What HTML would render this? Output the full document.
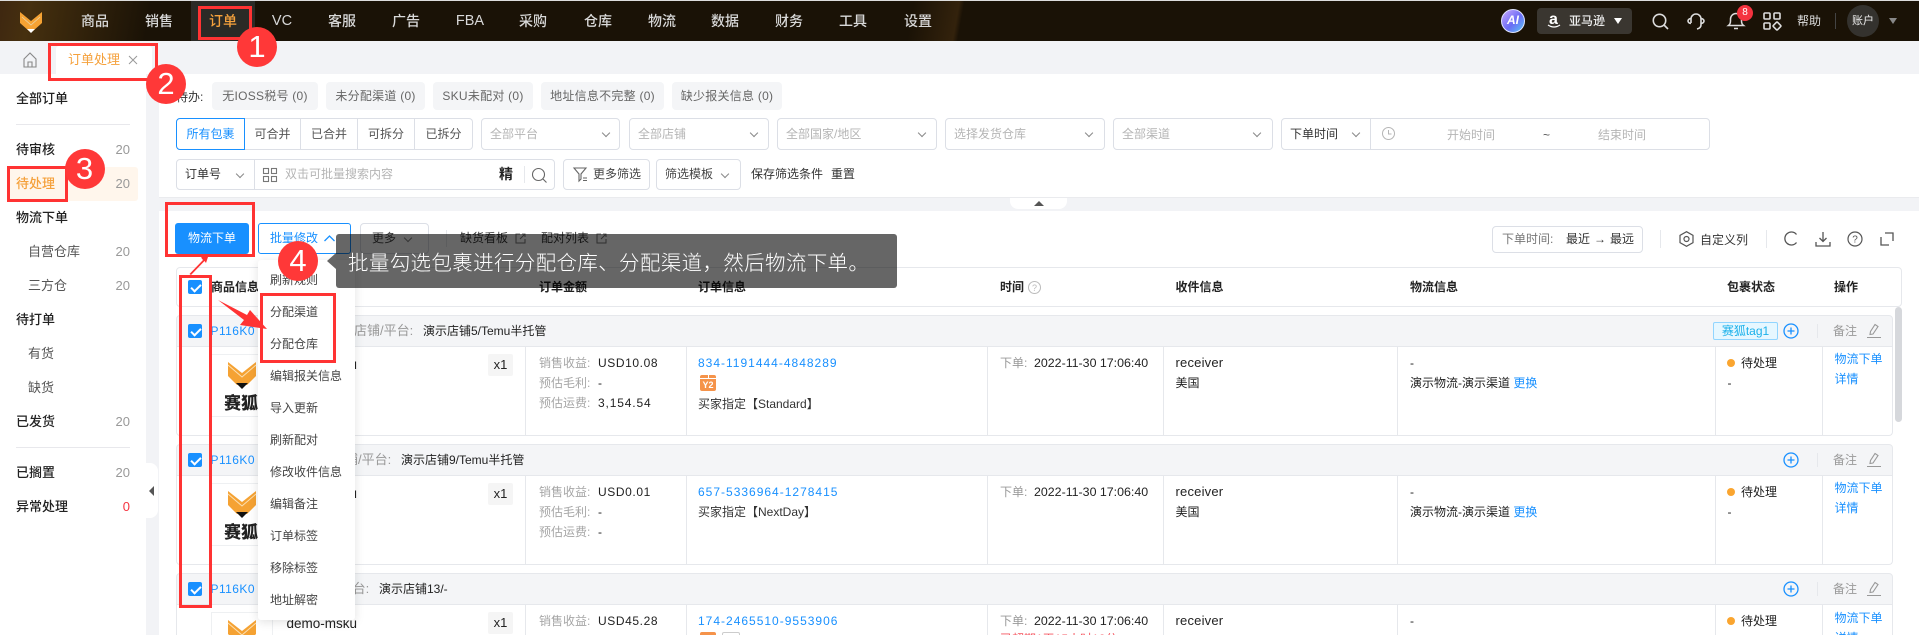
<!DOCTYPE html>
<html lang="zh"><head><meta charset="utf-8"><title>订单处理</title>
<style>
*{box-sizing:border-box;margin:0;padding:0}
html,body{width:1919px;height:635px;overflow:hidden;background:#f2f3f6}
#root{position:relative;width:1919px;height:635px;overflow:hidden;background:#f2f3f6;font-family:"Liberation Sans","Noto Sans CJK SC",sans-serif;font-size:12px;color:#222}
.t{position:absolute;white-space:nowrap;line-height:20px;height:20px}
.b{position:absolute}
.g{color:#a6a6a6}.bl{color:#1890ff}.d{color:#555}
.v{font-size:12px;letter-spacing:.6px}
.o{font-size:12px;letter-spacing:1px}
.dt{font-size:12.4px}
.p{font-size:12px;letter-spacing:.45px}
.nav{color:#d8d8d8;font-size:14px;transform:translateX(-50%);font-weight:500}
.side{font-size:13px;color:#222;font-weight:500}
.sub{font-size:13px;color:#555;font-weight:400}
.cnt{font-size:13px;color:#999;text-align:right;width:30px;left:100px}
.chip{position:absolute;top:82px;height:28px;background:#f4f5f7;border-radius:4px;color:#666;line-height:28px;text-align:center;font-size:12px;letter-spacing:.25px}
.ipt{position:absolute;border:1px solid #dcdfe6;border-radius:4px;background:#fff}
.ph{color:#b5b5b5}
.arr{position:absolute;width:6px;height:6px;border-right:1px solid #888;border-bottom:1px solid #888;transform:rotate(45deg)}
.seg{position:absolute;top:118px;height:32px;line-height:30px;text-align:center;color:#555;font-size:12px;border:1px solid #dcdfe6;border-left:0;background:#fff}
.th{font-weight:700;top:277px;font-size:12px;color:#222}
.rowhead{position:absolute;left:175.5px;width:1717.5px;background:#f4f5f7;border:1px solid #e6e8ec;border-radius:4px 4px 0 0}
.rowbody{position:absolute;left:175.5px;width:1717.5px;background:#fff;border:1px solid #e6e8ec;border-top:0;border-radius:0 0 4px 4px}
.vl{position:absolute;width:1px;background:#e6e8ec}
.cb{position:absolute;left:188px;width:14px;height:14px;background:#1890ff;border-radius:2px}
.cb:after{content:"";position:absolute;left:4.5px;top:1.5px;width:4px;height:8px;border:solid #fff;border-width:0 2px 2px 0;transform:rotate(45deg)}
.x1{position:absolute;left:488px;width:25px;height:22px;background:#f5f5f5;border-radius:2px;text-align:center;line-height:22px;font-size:13px;color:#222}
.mi{position:absolute;left:270px;font-size:12px;color:#444;white-space:nowrap;line-height:20px}
.rb{position:absolute;border:3px solid #ff3333;z-index:30}
.circ{position:absolute;width:40px;height:40px;border-radius:50%;background:#ff3838;color:#fff;font-size:31px;line-height:40px;text-align:center;z-index:40}
.fox{position:absolute;left:224px;font:900 17px/20px "Noto Sans CJK SC",sans-serif;color:#222;white-space:nowrap}
svg{position:absolute;overflow:visible}
</style></head><body><div id="root">

<!-- top bar -->
<div class="b" style="left:0;top:0;width:1919px;height:1px;background:#ddd"></div>
<div class="b" style="left:0;top:1px;width:1919px;height:40px;background:linear-gradient(100deg,#3e2710 0,#46300f 30px,#1a1206 150px,#1a1206 900px,#33220c 945px,#1a1206 950px)"></div>
<div class="b" style="left:191px;top:1px;width:64px;height:40px;background:#2b2a26"></div>
<svg style="left:20px;top:12px" width="22" height="21" viewBox="0 0 22 21"><path d="M0 0L11 9L22 0V11L13 19H9L0 11Z" fill="#f5a233"/><path d="M2 5L11 13L20 5" fill="none" stroke="#e8d4a8" stroke-width=".8"/><path d="M7 17H15L11 21Z" fill="#fff"/></svg>
<div class="t nav" style="left:95px;top:11px">商品</div>
<div class="t nav" style="left:159px;top:11px">销售</div>
<div class="t nav" style="left:223px;top:11px;color:#f5a13c">订单</div>
<div class="t nav" style="left:282px;top:11px;font-size:14.5px">VC</div>
<div class="t nav" style="left:342px;top:11px">客服</div>
<div class="t nav" style="left:406px;top:11px">广告</div>
<div class="t nav" style="left:470px;top:11px;font-size:14.5px">FBA</div>
<div class="t nav" style="left:533px;top:11px">采购</div>
<div class="t nav" style="left:598px;top:11px">仓库</div>
<div class="t nav" style="left:662px;top:11px">物流</div>
<div class="t nav" style="left:725px;top:11px">数据</div>
<div class="t nav" style="left:789px;top:11px">财务</div>
<div class="t nav" style="left:853px;top:11px">工具</div>
<div class="t nav" style="left:918px;top:11px">设置</div>

<div class="b" style="left:1501px;top:9px;width:24px;height:24px;border-radius:50%;background:linear-gradient(135deg,#c9a8ff,#6b6cf5 55%,#58c8f5);border:1.5px solid #dfe4ff;color:#fff;font:italic 700 12px/21px 'Liberation Sans',sans-serif;text-align:center">AI</div>
<div class="b" style="left:1537px;top:8px;width:95px;height:26px;background:#3a3630;border-radius:4px"></div>
<div class="t" style="left:1549px;top:10px;color:#fff;font:700 16px/20px 'Liberation Sans',sans-serif">a</div>
<svg style="left:1547px;top:24px" width="14" height="5" viewBox="0 0 14 5"><path d="M1 1Q7 5 13 1" fill="none" stroke="#fff" stroke-width="1.2"/></svg>
<div class="t" style="left:1569px;top:11px;color:#eee;font-size:12px;font-weight:500">亚马逊</div>
<svg style="left:1614px;top:18px" width="8" height="6"><path d="M0 0H8L4 6Z" fill="#fff"/></svg>
<svg style="left:1652px;top:13px" width="17" height="17" viewBox="0 0 17 17" fill="none" stroke="#ddd" stroke-width="1.6"><circle cx="7.5" cy="7.5" r="6.2"/><path d="M12 12L16 16"/></svg>
<svg style="left:1687px;top:12px" width="18" height="19" viewBox="0 0 18 19" fill="none" stroke="#ddd" stroke-width="1.6"><path d="M4 11V7a5 5 0 0 1 10 0V13q0 3-4 4"/><path d="M4 6.5Q1 7 1 9t3 2.5M14 6.5q3 .5 3 2.5t-3 2.5"/></svg>
<svg style="left:1727px;top:12px" width="18" height="18" viewBox="0 0 18 18" fill="none" stroke="#ddd" stroke-width="1.5"><path d="M1.500 13.500Q3.500 12 3.500 9V7a5.500 5.500 0 0 1 11 0V9Q14.500 12 16.500 13.500ZM7 16.500H11"/></svg>
<div class="b" style="left:1737px;top:5px;width:16px;height:16px;border-radius:50%;background:#f5333f;color:#fff;font-size:10px;line-height:16px;text-align:center">8</div>
<svg style="left:1763px;top:12px" width="18" height="18" viewBox="0 0 18 18" fill="none" stroke="#ddd" stroke-width="1.6"><rect x="1" y="1" width="6" height="6" rx="1"/><rect x="11" y="1" width="6" height="6" rx="1"/><rect x="1" y="11" width="6" height="6" rx="1"/><rect x="11" y="11" width="6" height="6" rx="1" transform="rotate(45 14 14)"/></svg>
<div class="t" style="left:1797px;top:10.5px;color:#ddd;font-size:12px">帮助</div>
<div class="b" style="left:1835px;top:13px;width:1px;height:16px;background:#444"></div>
<div class="b" style="left:1847px;top:5px;width:32px;height:32px;border-radius:50%;background:#34322e;color:#eee;font-size:11px;line-height:32px;text-align:center">账户</div>
<svg style="left:1889px;top:18px" width="8" height="6"><path d="M0 0H8L4 6Z" fill="#888"/></svg>

<!-- tab band -->
<svg style="left:23px;top:52px" width="14" height="16" viewBox="0 0 14 16" fill="none" stroke="#888" stroke-width="1.1"><path d="M1 7L7 1L13 7V15H1ZM5 15V10H9V15"/></svg>
<div class="b" style="left:56px;top:46px;width:96px;height:28px;background:#fff;border-radius:3px 3px 0 0"></div>
<div class="t" style="left:68px;top:50px;color:#f5a13c;font-size:13px">订单处理</div>
<svg style="left:129px;top:56px" width="8" height="8" fill="none" stroke="#999" stroke-width="1"><path d="M0 0L8 8M8 0L0 8"/></svg>

<!-- sidebar -->
<div class="b" style="left:0;top:74px;width:146px;height:561px;background:#fff"></div>
<div class="t side" style="left:16px;top:89px">全部订单</div>
<div class="b" style="left:16px;top:124px;width:114px;height:1px;background:#e8e8ec"></div>
<div class="t side" style="left:16px;top:140px">待审核</div><div class="t cnt" style="top:140px">20</div>
<div class="b" style="left:8px;top:167px;width:130px;height:34px;background:#fff6ec;border-radius:3px"></div>
<div class="t side" style="left:16px;top:174px;color:#f5a13c">待处理</div><div class="t cnt" style="top:174px">20</div>
<div class="t side" style="left:16px;top:208px">物流下单</div>
<div class="t sub" style="left:28px;top:242px">自营仓库</div><div class="t cnt" style="top:242px">20</div>
<div class="t sub" style="left:28px;top:276px">三方仓</div><div class="t cnt" style="top:276px">20</div>
<div class="t side" style="left:16px;top:310px">待打单</div>
<div class="t sub" style="left:28px;top:344px">有货</div>
<div class="t sub" style="left:28px;top:378px">缺货</div>
<div class="t side" style="left:16px;top:412px">已发货</div><div class="t cnt" style="top:412px">20</div>
<div class="b" style="left:16px;top:447px;width:114px;height:1px;background:#e8e8ec"></div>
<div class="t side" style="left:16px;top:463px">已搁置</div><div class="t cnt" style="top:463px">20</div>
<div class="t side" style="left:16px;top:497px">异常处理</div><div class="t cnt" style="top:497px;color:#f5333f">0</div>
<div class="b" style="left:146px;top:463px;width:12px;height:55px;background:#fff;border-radius:0 8px 8px 0"></div>
<svg style="left:149px;top:486px" width="5" height="10"><path d="M5 0V10L0 5Z" fill="#555"/></svg>

<!-- filter panel -->
<div class="b" style="left:159px;top:74px;width:1760px;height:124px;background:#fff;border-bottom:1px solid #eaebee"></div>
<div class="t" style="left:176px;top:87px;color:#333;font-size:12px">待办:</div>
<div class="chip" style="left:212px;width:106px">无IOSS税号 (0)</div>
<div class="chip" style="left:326px;width:99px">未分配渠道 (0)</div>
<div class="chip" style="left:433px;width:100px">SKU未配对 (0)</div>
<div class="chip" style="left:541px;width:123px">地址信息不完整 (0)</div>
<div class="chip" style="left:672px;width:110px">缺少报关信息 (0)</div>

<div class="seg" style="left:176px;width:69px;border:1px solid #1890ff;border-radius:4px 0 0 4px;color:#1890ff">所有包裹</div>
<div class="seg" style="left:245px;width:56px">可合并</div>
<div class="seg" style="left:301px;width:57px">已合并</div>
<div class="seg" style="left:358px;width:57px">可拆分</div>
<div class="seg" style="left:415px;width:58px;border-radius:0 4px 4px 0">已拆分</div>

<div class="ipt" style="left:481px;top:118px;width:139px;height:32px"></div><div class="t ph" style="left:490px;top:124px">全部平台</div><div class="arr" style="left:603px;top:130px"></div>
<div class="ipt" style="left:629px;top:118px;width:140px;height:32px"></div><div class="t ph" style="left:638px;top:124px">全部店铺</div><div class="arr" style="left:751px;top:130px"></div>
<div class="ipt" style="left:777px;top:118px;width:160px;height:32px"></div><div class="t ph" style="left:786px;top:124px">全部国家/地区</div><div class="arr" style="left:919px;top:130px"></div>
<div class="ipt" style="left:945px;top:118px;width:160px;height:32px"></div><div class="t ph" style="left:954px;top:124px">选择发货仓库</div><div class="arr" style="left:1086px;top:130px"></div>
<div class="ipt" style="left:1113px;top:118px;width:160px;height:32px"></div><div class="t ph" style="left:1122px;top:124px">全部渠道</div><div class="arr" style="left:1254px;top:130px"></div>
<div class="ipt" style="left:1281px;top:118px;width:429px;height:32px"></div>
<div class="vl" style="left:1370px;top:119px;height:30px;background:#dcdfe6"></div>
<div class="t" style="left:1290px;top:124px;color:#333">下单时间</div><div class="arr" style="left:1353px;top:130px"></div>
<svg style="left:1382px;top:127px" width="13" height="13" fill="none" stroke="#b5b5b5"><circle cx="6.5" cy="6.5" r="6"/><path d="M6.5 3V7H9.5"/></svg>
<div class="t ph" style="left:1447px;top:125px">开始时间</div>
<div class="t d" style="left:1543px;top:125px">~</div>
<div class="t ph" style="left:1598px;top:125px">结束时间</div>

<div class="ipt" style="left:176px;top:159px;width:379px;height:31px"></div>
<div class="vl" style="left:254px;top:160px;height:29px;background:#dcdfe6"></div>
<div class="t" style="left:185px;top:164px;color:#333">订单号</div><div class="arr" style="left:237px;top:171px"></div>
<svg style="left:263px;top:168px" width="14" height="14" fill="none" stroke="#777" stroke-width="1.1"><rect x=".5" y=".5" width="5" height="5"/><rect x="8.5" y=".5" width="5" height="5"/><rect x=".5" y="8.5" width="5" height="5"/><rect x="8.5" y="8.5" width="5" height="5"/></svg>
<div class="t ph" style="left:285px;top:164px">双击可批量搜索内容</div>
<div class="t" style="left:499px;top:164px;font-size:14px;font-weight:700;color:#222">精</div>
<div class="vl" style="left:524px;top:166px;height:17px"></div>
<svg style="left:532px;top:168px" width="15" height="15" fill="none" stroke="#666" stroke-width="1.1"><circle cx="6.5" cy="6.5" r="6"/><path d="M11 11L14.5 14.5"/></svg>
<div class="ipt" style="left:563px;top:159px;width:87px;height:31px"></div>
<svg style="left:573px;top:167px" width="14" height="15" fill="none" stroke="#666" stroke-width="1.1"><path d="M1 1H13L8 7V12L6 14V7Z"/><path d="M10 11H14M10 13.5H14"/></svg>
<div class="t" style="left:593px;top:164px;color:#444">更多筛选</div>
<div class="ipt" style="left:656px;top:159px;width:85px;height:31px"></div>
<div class="t" style="left:665px;top:164px;color:#444">筛选模板</div><div class="arr" style="left:722px;top:171px"></div>
<div class="t" style="left:751px;top:164px;color:#333">保存筛选条件</div>
<div class="t" style="left:831px;top:164px;color:#333">重置</div>
<div class="b" style="left:1010px;top:198px;width:57px;height:11px;background:#fff;border-radius:0 0 8px 8px"></div>
<svg style="left:1034px;top:201px" width="10" height="5"><path d="M0 5H10L5 0Z" fill="#555"/></svg>

<!-- list panel -->
<div class="b" style="left:159px;top:211px;width:1760px;height:424px;background:#fff"></div>
<div class="b" style="left:175px;top:223px;width:74px;height:31px;background:#1890ff;border-radius:3px;color:#fff;line-height:31px;text-align:center;font-size:12px">物流下单</div>
<div class="b" style="left:257.5px;top:223px;width:93px;height:31px;background:#fff;border:1px solid #1890ff;border-radius:3px"></div>
<div class="t bl" style="left:270px;top:228px">批量修改</div>
<svg style="left:324px;top:235px" width="11" height="7" fill="none" stroke="#1890ff" stroke-width="1.3"><path d="M.5 6L5.5 1L10.5 6"/></svg>
<div class="ipt" style="left:360px;top:223px;width:69px;height:31px"></div>
<div class="t" style="left:372px;top:228px;color:#444">更多</div><div class="arr" style="left:405px;top:235px"></div>
<div class="vl" style="left:446px;top:230px;height:17px"></div>
<div class="t" style="left:460px;top:228px;color:#333">缺货看板</div>
<svg style="left:515px;top:233px" width="11" height="11" fill="none" stroke="#777"><path d="M5 1H1V10H10V6M7 1H10V4M10 1L5 6"/></svg>
<div class="t" style="left:541px;top:228px;color:#333">配对列表</div>
<svg style="left:596px;top:233px" width="11" height="11" fill="none" stroke="#777"><path d="M5 1H1V10H10V6M7 1H10V4M10 1L5 6"/></svg>

<div class="ipt" style="left:1492px;top:226px;width:151px;height:27px"></div>
<div class="t" style="left:1502px;top:229px;color:#777">下单时间:</div>
<div class="t" style="left:1566px;top:229px;color:#333">最近</div>
<div class="t" style="left:1594px;top:229px;color:#333">→</div>
<div class="t" style="left:1610px;top:229px;color:#333">最远</div>
<div class="vl" style="left:1660px;top:230px;height:18px"></div>
<svg style="left:1679px;top:231px" width="15" height="16" fill="none" stroke="#555" stroke-width="1.2"><path d="M7.5 .7L14 4.3V11.7L7.5 15.3L1 11.7V4.3Z"/><circle cx="7.5" cy="8" r="2.5"/></svg>
<div class="t" style="left:1700px;top:230px;color:#333">自定义列</div>
<div class="vl" style="left:1766px;top:230px;height:18px"></div>
<svg style="left:1784px;top:231px" width="14" height="15" fill="none" stroke="#555" stroke-width="1.3"><path d="M12.5 3.5A6.5 6.5 0 1 0 12.5 11.500"/></svg>
<svg style="left:1815px;top:231px" width="16" height="16" fill="none" stroke="#555" stroke-width="1.3"><path d="M8 1V10M4.5 7L8 10.5L11.5 7M1 11V15H15V11"/></svg>
<svg style="left:1847px;top:231px" width="16" height="16" fill="none" stroke="#555" stroke-width="1.2"><circle cx="8" cy="8" r="7"/><text x="8" y="11.5" font-size="10" text-anchor="middle" fill="#555" stroke="none" font-family="Liberation Sans">?</text></svg>
<svg style="left:1880px;top:232px" width="14" height="14" fill="none" stroke="#555" stroke-width="1.3"><path d="M1 5V13H9M5 1H13V9"/></svg>

<!-- table header -->
<div class="b" style="left:175.5px;top:267px;width:1726px;height:40px;background:#fff;border:1px solid #e6e8ec;border-radius:4px"></div>
<div class="t th" style="left:211px">商品信息</div>
<div class="t th" style="left:539px">订单金额</div>
<div class="t th" style="left:698px">订单信息</div>
<div class="t th" style="left:1000px">时间</div>
<svg style="left:1028px;top:281px" width="13" height="13" fill="none" stroke="#bbb"><circle cx="6.5" cy="6.5" r="6"/><text x="6.5" y="10" font-size="9" text-anchor="middle" fill="#bbb" stroke="none" font-family="Liberation Sans">?</text></svg>
<div class="t th" style="left:1175.5px">收件信息</div>
<div class="t th" style="left:1410px">物流信息</div>
<div class="t th" style="left:1727px">包裹状态</div>
<div class="t th" style="left:1834px">操作</div>

<!-- scrollbar -->
<div class="b" style="left:1895px;top:307px;width:7px;height:115px;background:#d6d8dc;border-radius:4px"></div>

<!-- ROW 1 -->
<div class="rowhead" style="top:315px;height:32px"></div>
<div class="rowbody" style="top:347px;height:88.5px"></div>
<div class="vl" style="left:525px;top:347px;height:88px"></div><div class="vl" style="left:685.5px;top:347px;height:88px"></div><div class="vl" style="left:987px;top:347px;height:88px"></div><div class="vl" style="left:1162.5px;top:347px;height:88px"></div><div class="vl" style="left:1397px;top:347px;height:88px"></div><div class="vl" style="left:1714.5px;top:347px;height:88px"></div><div class="vl" style="left:1821.5px;top:347px;height:88px"></div>
<div class="t bl p" style="left:210.5px;top:321px">P116K0</div>
<div class="t" style="left:354px;top:321px;font-size:13px;color:#999">店铺/平台:</div>
<div class="t" style="left:423px;top:321px">演示店铺5/Temu半托管</div>
<div class="b" style="left:1713px;top:322px;width:65px;height:18px;background:#e6f7ff;border:1px solid #91d5ff;border-radius:2px;color:#1ab0ea;font-size:12px;line-height:16px;text-align:center">赛狐tag1</div>
<svg style="left:1783px;top:323px" width="16" height="16" fill="none" stroke="#1890ff" stroke-width="1.3"><circle cx="8" cy="8" r="7"/><path d="M8 4.5V11.5M4.5 8H11.5"/></svg>
<div class="vl" style="left:1816.5px;top:324px;height:14px"></div>
<div class="t" style="left:1833px;top:321px;color:#999">备注</div>
<svg style="left:1867px;top:323px" width="14" height="15" fill="none" stroke="#999" stroke-width="1.1"><path d="M8 1.5L11 3.5L6 11L3 11.5L3.5 8.5ZM0 14.5H14"/></svg>

<div class="b" style="left:210.5px;top:354px;width:60px;height:63px;border:1px solid #eef0f2;border-right:0;background:#fff"></div>
<svg style="left:228px;top:362px" width="28" height="27" viewBox="0 0 28 27"><path d="M0 0L14 11L28 0V14L19 23H9L0 14Z" fill="#f5a233"/><path d="M0 3L14 15L28 3" fill="none" stroke="#fbe0b4" stroke-width="1"/><path d="M8 21H20L14 27Z" fill="#111"/></svg>
<div class="fox" style="top:392px">赛狐</div>
<div class="t" style="left:286.5px;top:355px;font-size:13.5px">demo-msku</div>
<div class="x1" style="top:354px">x1</div>
<div class="t g" style="left:539px;top:353px">销售收益:</div><div class="t v" style="left:598px;top:353px">USD10.08</div>
<div class="t g" style="left:539px;top:373px">预估毛利:</div><div class="t v" style="left:598px;top:373px">-</div>
<div class="t g" style="left:539px;top:393px">预估运费:</div><div class="t v" style="left:598px;top:393px;letter-spacing:.85px">3,154.54</div>
<div class="t bl o" style="left:698px;top:353px">834-1191444-4848289</div>
<div class="b" style="left:700px;top:375px;width:16px;height:16px;background:#f5934a;border-radius:2px;color:#fff;font-size:9px;line-height:21px;text-align:center;font-weight:700">Y2</div>
<div class="b" style="left:700px;top:378px;width:16px;height:1px;background:#fff"></div>
<div class="b" style="left:707.5px;top:375px;width:1px;height:4px;background:#fff"></div>
<div class="t" style="left:698px;top:394px;color:#333">买家指定【Standard】</div>
<div class="t" style="left:1000px;top:353px;color:#999">下单:</div><div class="t dt" style="left:1034px;top:353px">2022-11-30 17:06:40</div>
<div class="t" style="left:1175.5px;top:353px;font-size:13px;letter-spacing:.2px">receiver</div>
<div class="t" style="left:1175.5px;top:373px">美国</div>
<div class="t" style="left:1410px;top:353px">-</div>
<div class="t" style="left:1410px;top:373px">演示物流-演示渠道 <span class="bl">更换</span></div>
<div class="b" style="left:1727px;top:359px;width:8px;height:8px;border-radius:50%;background:#faa52f"></div>
<div class="t" style="left:1741px;top:353px">待处理</div>
<div class="t" style="left:1727.5px;top:373px">-</div>
<div class="t bl" style="left:1834.5px;top:349px">物流下单</div>
<div class="t bl" style="left:1834.5px;top:369px">详情</div>

<!-- ROW 2 -->
<div class="rowhead" style="top:444px;height:32px"></div>
<div class="rowbody" style="top:476px;height:88.5px"></div>
<div class="vl" style="left:525px;top:476px;height:88px"></div><div class="vl" style="left:685.5px;top:476px;height:88px"></div><div class="vl" style="left:987px;top:476px;height:88px"></div><div class="vl" style="left:1162.5px;top:476px;height:88px"></div><div class="vl" style="left:1397px;top:476px;height:88px"></div><div class="vl" style="left:1714.5px;top:476px;height:88px"></div><div class="vl" style="left:1821.5px;top:476px;height:88px"></div>
<div class="t bl p" style="left:210.5px;top:450px">P116K0</div>
<div class="t" style="left:332px;top:450px;font-size:13px;color:#999">店铺/平台:</div>
<div class="t" style="left:401px;top:450px">演示店铺9/Temu半托管</div>
<svg style="left:1783px;top:452px" width="16" height="16" fill="none" stroke="#1890ff" stroke-width="1.3"><circle cx="8" cy="8" r="7"/><path d="M8 4.5V11.5M4.5 8H11.5"/></svg>
<div class="vl" style="left:1816.5px;top:453px;height:14px"></div>
<div class="t" style="left:1833px;top:450px;color:#999">备注</div>
<svg style="left:1867px;top:452px" width="14" height="15" fill="none" stroke="#999" stroke-width="1.1"><path d="M8 1.5L11 3.5L6 11L3 11.5L3.5 8.5ZM0 14.5H14"/></svg>

<div class="b" style="left:210.5px;top:483px;width:60px;height:63px;border:1px solid #eef0f2;border-right:0;background:#fff"></div>
<svg style="left:228px;top:491px" width="28" height="27" viewBox="0 0 28 27"><path d="M0 0L14 11L28 0V14L19 23H9L0 14Z" fill="#f5a233"/><path d="M0 3L14 15L28 3" fill="none" stroke="#fbe0b4" stroke-width="1"/><path d="M8 21H20L14 27Z" fill="#111"/></svg>
<div class="fox" style="top:521px">赛狐</div>
<div class="t" style="left:286.5px;top:484px;font-size:13.5px">demo-msku</div>
<div class="x1" style="top:483px">x1</div>
<div class="t g" style="left:539px;top:482px">销售收益:</div><div class="t v" style="left:598px;top:482px">USD0.01</div>
<div class="t g" style="left:539px;top:502px">预估毛利:</div><div class="t v" style="left:598px;top:502px">-</div>
<div class="t g" style="left:539px;top:522px">预估运费:</div><div class="t v" style="left:598px;top:522px">-</div>
<div class="t bl o" style="left:698px;top:482px">657-5336964-1278415</div>
<div class="t" style="left:698px;top:502px;color:#333">买家指定【NextDay】</div>
<div class="t" style="left:1000px;top:482px;color:#999">下单:</div><div class="t dt" style="left:1034px;top:482px">2022-11-30 17:06:40</div>
<div class="t" style="left:1175.5px;top:482px;font-size:13px;letter-spacing:.2px">receiver</div>
<div class="t" style="left:1175.5px;top:502px">美国</div>
<div class="t" style="left:1410px;top:482px">-</div>
<div class="t" style="left:1410px;top:502px">演示物流-演示渠道 <span class="bl">更换</span></div>
<div class="b" style="left:1727px;top:488px;width:8px;height:8px;border-radius:50%;background:#faa52f"></div>
<div class="t" style="left:1741px;top:482px">待处理</div>
<div class="t" style="left:1727.5px;top:502px">-</div>
<div class="t bl" style="left:1834.5px;top:478px">物流下单</div>
<div class="t bl" style="left:1834.5px;top:498px">详情</div>

<!-- ROW 3 -->
<div class="rowhead" style="top:573px;height:32px"></div>
<div class="rowbody" style="top:605px;height:60px"></div>
<div class="vl" style="left:525px;top:605px;height:30px"></div><div class="vl" style="left:685.5px;top:605px;height:30px"></div><div class="vl" style="left:987px;top:605px;height:30px"></div><div class="vl" style="left:1162.5px;top:605px;height:30px"></div><div class="vl" style="left:1397px;top:605px;height:30px"></div><div class="vl" style="left:1714.5px;top:605px;height:30px"></div><div class="vl" style="left:1821.5px;top:605px;height:30px"></div>
<div class="t bl p" style="left:210.5px;top:579px">P116K0</div>
<div class="t" style="left:310px;top:579px;font-size:13px;color:#999">店铺/平台:</div>
<div class="t" style="left:379px;top:579px">演示店铺13/-</div>
<svg style="left:1783px;top:581px" width="16" height="16" fill="none" stroke="#1890ff" stroke-width="1.3"><circle cx="8" cy="8" r="7"/><path d="M8 4.5V11.5M4.5 8H11.5"/></svg>
<div class="vl" style="left:1816.5px;top:582px;height:14px"></div>
<div class="t" style="left:1833px;top:579px;color:#999">备注</div>
<svg style="left:1867px;top:581px" width="14" height="15" fill="none" stroke="#999" stroke-width="1.1"><path d="M8 1.5L11 3.5L6 11L3 11.5L3.5 8.5ZM0 14.5H14"/></svg>

<div class="b" style="left:210.5px;top:612px;width:62px;height:30px;border:1px solid #eef0f2;background:#fff"></div>
<svg style="left:228px;top:620px" width="28" height="27" viewBox="0 0 28 27"><path d="M0 0L14 11L28 0V14L19 23H9L0 14Z" fill="#f5a233"/><path d="M0 3L14 15L28 3" fill="none" stroke="#fbe0b4" stroke-width="1"/></svg>
<div class="t" style="left:286.5px;top:614px;font-size:13.5px">demo-msku</div>
<div class="x1" style="top:612px">x1</div>
<div class="t g" style="left:539px;top:611px">销售收益:</div><div class="t v" style="left:598px;top:611px">USD45.28</div>
<div class="t bl o" style="left:698px;top:611px">174-2465510-9553906</div>
<div class="b" style="left:700px;top:632px;width:16px;height:10px;background:#f5934a;border-radius:2px"></div>
<div class="b" style="left:722px;top:632px;width:18px;height:10px;border:1px solid #ccc;border-radius:2px"></div>
<div class="t" style="left:1000px;top:611px;color:#999">下单:</div><div class="t dt" style="left:1034px;top:611px">2022-11-30 17:06:40</div>
<div class="t" style="left:1000px;top:629px;color:#f5555f">已超期1天15小时12分</div>
<div class="t" style="left:1175.5px;top:611px;font-size:13px;letter-spacing:.2px">receiver</div>
<div class="t" style="left:1410px;top:611px">-</div>
<div class="b" style="left:1727px;top:617px;width:8px;height:8px;border-radius:50%;background:#faa52f"></div>
<div class="t" style="left:1741px;top:611px">待处理</div>
<div class="t bl" style="left:1834.5px;top:608px">物流下单</div>
<div class="t bl" style="left:1834.5px;top:628px">详情</div>

<!-- checkboxes -->
<div class="cb" style="top:280px"></div>
<div class="cb" style="top:324px"></div>
<div class="cb" style="top:453px"></div>
<div class="cb" style="top:582px"></div>

<!-- dropdown menu -->
<div class="b" style="left:258px;top:260px;width:96.5px;height:360px;background:#fff;border-radius:3px;box-shadow:0 2px 10px rgba(0,0,0,.12);z-index:10"></div>
<div style="position:absolute;left:0;top:0;z-index:11">
<div class="mi" style="top:270px">刷新规则</div>
<div class="mi" style="top:302px">分配渠道</div>
<div class="mi" style="top:334px">分配仓库</div>
<div class="mi" style="top:366px">编辑报关信息</div>
<div class="mi" style="top:398px">导入更新</div>
<div class="mi" style="top:430px">刷新配对</div>
<div class="mi" style="top:462px">修改收件信息</div>
<div class="mi" style="top:494px">编辑备注</div>
<div class="mi" style="top:526px">订单标签</div>
<div class="mi" style="top:558px">移除标签</div>
<div class="mi" style="top:590px">地址解密</div>
</div>

<!-- tooltip -->
<div class="b" style="left:336px;top:234px;width:561px;height:54px;background:rgba(0,0,0,.6);border-radius:3px;z-index:20;color:#fff;font-size:20.5px;letter-spacing:.35px;line-height:54px;padding-left:12px;white-space:nowrap;font-family:'Noto Sans CJK SC',sans-serif;font-weight:300">批量勾选包裹进行分配仓库、分配渠道，然后物流下单。</div>
<svg style="left:327px;top:253px;z-index:20" width="9" height="16"><path d="M9 0V16L0 8Z" fill="#666"/></svg>

<!-- annotations -->
<div class="rb" style="left:197.5px;top:6px;width:54px;height:34px"></div>
<div class="rb" style="left:48px;top:43px;width:110px;height:38px"></div>
<div class="rb" style="left:7px;top:165.5px;width:61px;height:36px"></div>
<div class="rb" style="left:165px;top:202px;width:90px;height:55px"></div>
<div class="rb" style="left:179px;top:275px;width:33px;height:333px"></div>
<div class="rb" style="left:259.5px;top:292.5px;width:76.5px;height:70px"></div>
<svg style="left:185px;top:250px;z-index:30" width="30" height="25" viewBox="0 0 30 25"><path d="M4.5 24L18 10L16 7.5L24 4L21 13L19.500 11L6 25Z" fill="#ff3333"/></svg>
<svg style="left:215px;top:298px;z-index:30" width="55" height="35" viewBox="0 0 55 35"><path d="M3 2L32 17L35 12L52 31L25 27L29 22Z" fill="#ff3333"/></svg>
<div class="circ" style="left:237px;top:27px">1</div>
<div class="circ" style="left:146px;top:64px">2</div>
<div class="circ" style="left:64.5px;top:149px">3</div>
<div class="circ" style="left:278px;top:241px">4</div>
</div></body></html>
